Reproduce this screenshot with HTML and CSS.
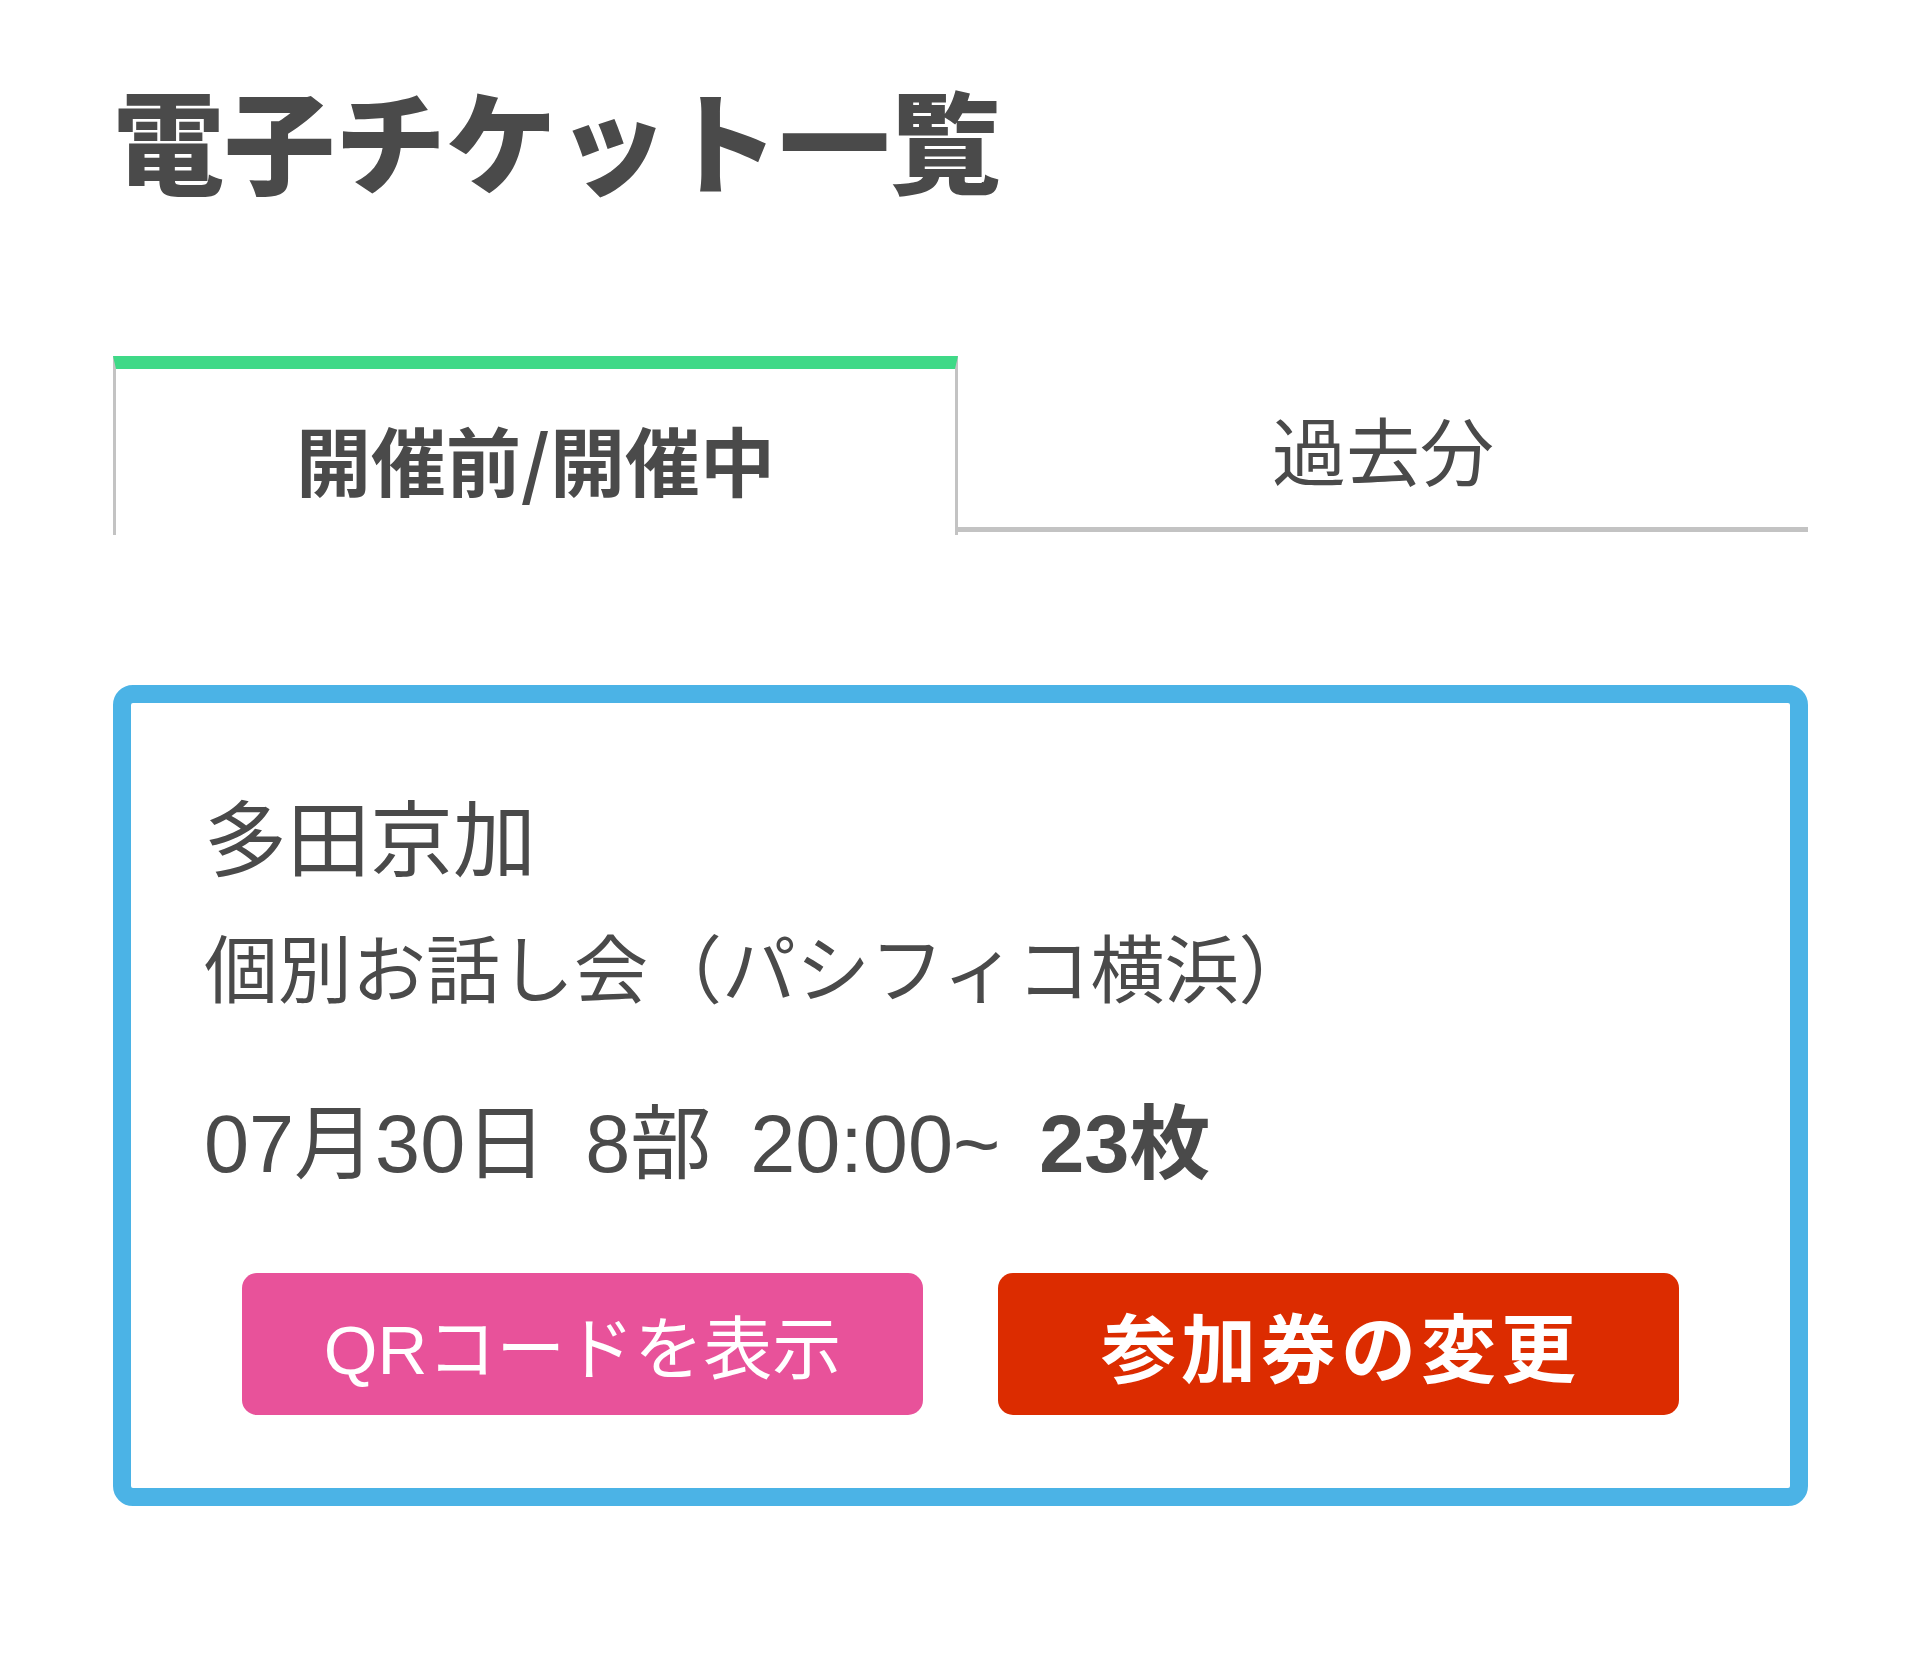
FILE: index.html
```html
<!DOCTYPE html>
<html lang="ja">
<head>
    <meta charset="UTF-8">
    <meta name="viewport" content="width=device-width, initial-scale=1">
    <title>電子チケット一覧</title>
    <link rel="stylesheet" href="styles.css">
</head>
<body>
    <div class="page">
        <h1 class="page-title">電子チケット一覧</h1>

        <!-- Tabs -->
        <div class="tabs">
            <div class="tab active">開催前/開催中</div>
            <div class="tab">過去分</div>
        </div>

        <!-- Ticket -->
        <div class="ticket-card">
            <div class="ticket-info">
                <p class="artist">多田京加</p>
                <p class="event">個別お話し会（パシフィコ横浜）</p>
                <p class="schedule"><span>07月30日</span><span>8部</span><span>20:00~</span><strong>23枚</strong></p>
            </div>
            <div class="buttons">
                <button class="btn btn-qr">QRコードを表示</button>
                <button class="btn btn-change">参加券の変更</button>
            </div>
        </div>
    </div>
</body>
</html>
```

FILE: styles.css
```css
body {
    margin: 0;
    background: #fff;
    color: #4a4a4a;
    font-family: "Liberation Sans", "Noto Sans CJK JP", sans-serif;
}
.page {
    width: 1695px;
    padding: 93px 0 0 113px;
}
.page-title {
    margin: 0;
    font-size: 111px;
    line-height: 111px;
    font-weight: 900;
}
.tabs {
    display: flex;
    align-items: flex-start;
    margin-top: 152px;
}
.tab {
    box-sizing: border-box;
    flex: 1;
    text-align: center;
    font-size: 74px;
    line-height: 74px;
    padding: 62px 0 35px;
    border-bottom: 5px solid #c3c3c3;
}
.tab.active {
    flex: 0 0 845px;
    font-family: "Noto Sans CJK JP", sans-serif;
    font-size: 75px;
    line-height: 75px;
    font-weight: 700;
    padding: 52px 0 39px;
    border-top: 13px solid #3fd987;
    border-left: 3px solid #c3c3c3;
    border-right: 3px solid #c3c3c3;
    border-bottom: none;
}
.ticket-card {
    margin-top: 150px;
    border: 18px solid #4bb3e6;
    border-radius: 20px;
    padding: 97px 0 73px;
}
.ticket-info {
    padding-left: 73px;
}
.ticket-info p {
    margin: 0;
}
.artist {
    font-size: 83px;
    line-height: 83px;
}
.event {
    margin-top: 52px !important;
    font-size: 74px;
    line-height: 74px;
}
.schedule {
    margin-top: 95px !important;
    font-size: 81px;
    line-height: 81px;
}
.schedule span {
    margin-right: 39px;
}
.schedule strong {
    font-weight: 700;
}
.buttons {
    display: flex;
    justify-content: center;
    gap: 75px;
    margin-top: 88px;
}
.btn {
    width: 681px;
    height: 142px;
    border: none;
    border-radius: 15px;
    color: #fff;
    font-family: "Liberation Sans", "Noto Sans CJK JP", sans-serif;
    padding: 0;
    cursor: pointer;
}
.btn-qr {
    background: #e8529a;
    font-size: 69px;
}
.btn-change {
    background: #dc2c00;
    font-size: 75px;
    font-weight: 700;
    letter-spacing: 5px;
    padding-left: 5px;
}
```
